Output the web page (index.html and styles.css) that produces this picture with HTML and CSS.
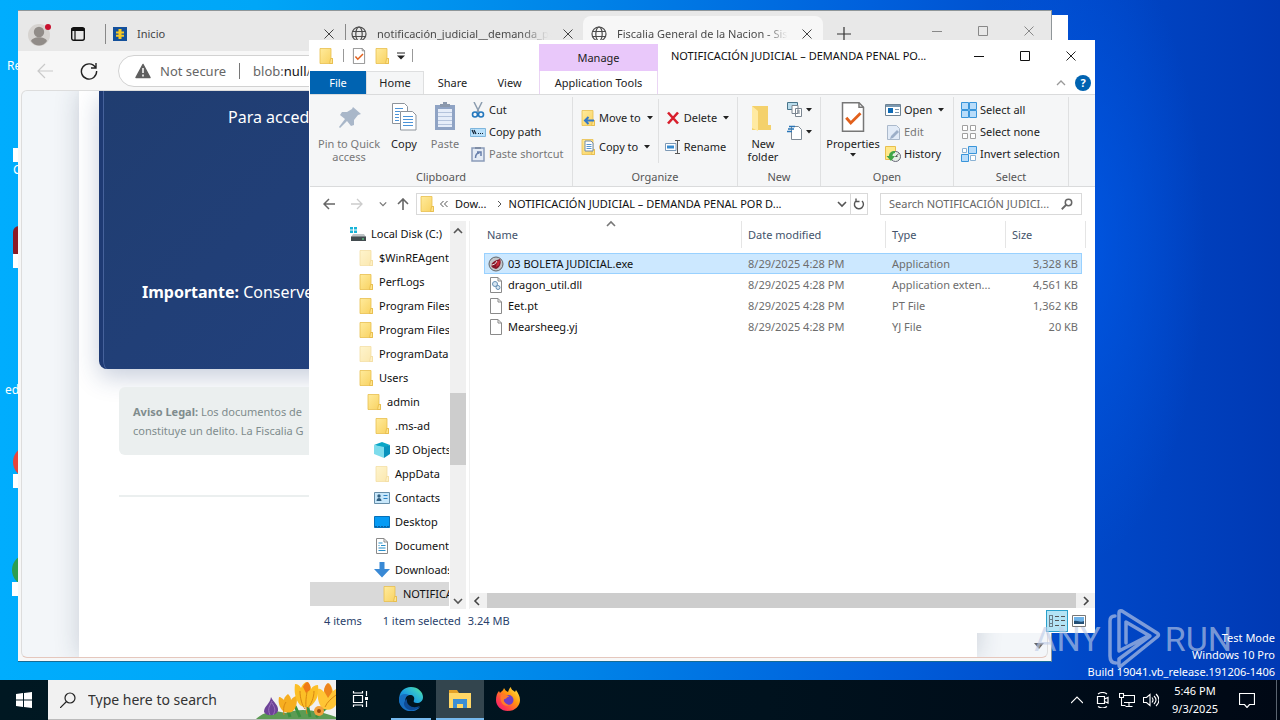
FILE: index.html
```html
<!DOCTYPE html>
<html lang="en">
<head>
<meta charset="utf-8">
<title>Desktop</title>
<link rel="stylesheet" href="styles.css">
</head>
<body>
<svg class="sprite" aria-hidden="true">
  <defs>
    <linearGradient id="gFolder" x1="0" y1="0" x2="1" y2="1"><stop offset="0" stop-color="#ffeb9c"/><stop offset="1" stop-color="#f8d15f"/></linearGradient>
    <linearGradient id="gEdge" x1="0" y1="1" x2="1" y2="0"><stop offset="0" stop-color="#0c59a4"/><stop offset=".45" stop-color="#1b9de2"/><stop offset=".75" stop-color="#36c6c9"/><stop offset="1" stop-color="#66eb6e"/></linearGradient>
    <linearGradient id="gFox" x1="1" y1="0" x2="0" y2="1"><stop offset="0" stop-color="#fff44f"/><stop offset=".4" stop-color="#ff980e"/><stop offset=".75" stop-color="#ff3750"/><stop offset="1" stop-color="#e31587"/></linearGradient>
  </defs>
  <symbol id="folder" viewBox="0 0 16 16"><path d="M2 .5h11v10h1.500v5H2z" fill="url(#gFolder)" stroke="#e8bf4e" stroke-width=".8"/><path d="M12.600 10.500l-1 5h2.900v-5z" fill="#ffe48c" stroke="#e3b53f" stroke-width=".7"/></symbol>
  <symbol id="x" viewBox="0 0 12 12"><path d="M1.500 1.500l9 9m0-9l-9 9" stroke="currentColor" fill="none"/></symbol>
  <symbol id="down" viewBox="0 0 10 10"><path d="M1 3l4 4 4-4" stroke="currentColor" stroke-width="1.600" fill="none"/></symbol>
  <symbol id="tri" viewBox="0 0 6 4"><path d="M0 0h6l-3 3.500z" fill="currentColor"/></symbol>
  <symbol id="globe" viewBox="0 0 16 16"><g fill="none" stroke="#4c4c4c" stroke-width="1.200"><circle cx="8" cy="8" r="7"/><ellipse cx="8" cy="8" rx="3.200" ry="7"/><path d="M1.500 5.500h13M1.500 10.500h13"/></g></symbol>
  <symbol id="page" viewBox="0 0 16 16"><path d="M2.500.500h7.500l3.500 3.500v11.500h-11z" fill="#fff" stroke="#8a8a8a"/><path d="M10 .500v3.500h3.500" fill="none" stroke="#8a8a8a"/></symbol>
  <symbol id="check" viewBox="0 0 16 20"><path d="M1 .500h11l3 3v16H1z" fill="#fff" stroke="#777"/><path d="M12 .500v3h3" fill="none" stroke="#777"/><path d="M3.500 10.500l3 3.500 6.500-6.500" stroke="#e2601c" stroke-width="1.900" fill="none"/></symbol>
  <symbol id="lens" viewBox="0 0 16 16"><circle cx="10" cy="6" r="4.300" fill="none" stroke="currentColor" stroke-width="2"/><path d="M7 9l-6 6" stroke="currentColor" stroke-width="2.400"/></symbol>
</svg>

<div class="screen">
  <main class="desktop">
    <div class="shortcut s1">Re</div>
    <div class="shortcut s2"><i class="arrow"></i>C</div>
    <div class="shortcut s3"><i class="blob dark"></i><i class="arrow"></i></div>
    <div class="shortcut s4">ed</div>
    <div class="shortcut s5"><i class="blob red"></i><i class="arrow"></i></div>
    <div class="shortcut s6"><i class="blob green"></i><i class="arrow"></i></div>

    <div class="back-window"></div>

    <section class="browser">
      <header class="tabstrip">
        <svg class="avatar" viewBox="0 0 24 24"><circle cx="11" cy="13" r="11" fill="#d6d3d0"/><circle cx="11" cy="10" r="5.200" fill="#918c88"/><path d="M3 19c2-5 14-5 16 0-4 6-12 6-16 0z" fill="#918c88"/><circle cx="20" cy="5" r="3" fill="#c8102e"/></svg>
        <svg class="spaces" viewBox="0 0 16 16"><rect x="1.700" y="1.700" width="12.600" height="12.600" rx="2" fill="none" stroke="#111" stroke-width="1.400"/><path d="M1.500 2h13v3h-13z" fill="#111"/><path d="M5 5v9" stroke="#111" stroke-width="1.200"/></svg>
        <div class="tab t1"><svg class="i14" viewBox="0 0 14 14"><path d="M0 0h14v14H0z" fill="#14509b"/><path d="M5.500 2h3v2.500H11v2H8.500v1.200H11v2H8.500V12h-3V9.700H3v-2h2.500V6.500H3v-2h2.500z" fill="#f7c824"/></svg><span>Inicio</span><button aria-label="Close tab"><svg class="i12"><use href="#x"/></svg></button></div>
        <div class="tab t2"><svg class="i16"><use href="#globe"/></svg><span class="fade">notificación_judicial__demanda_pe</span><button aria-label="Close tab"><svg class="i12"><use href="#x"/></svg></button></div>
        <div class="tab t3"><svg class="i16"><use href="#globe"/></svg><span class="fade active-fade">Fiscalia General de la Nacion - Sist</span><button aria-label="Close tab"><svg class="i12"><use href="#x"/></svg></button></div>
        <button class="plus" aria-label="New tab"><svg class="i14" viewBox="0 0 14 14"><path d="M7 0v14M0 7h14" stroke="#333" stroke-width="1.200"/></svg></button>
        <div class="bcontrols">
          <button aria-label="Minimize"><svg class="i12" viewBox="0 0 12 12"><path d="M1 6.500h10" stroke="#888"/></svg></button>
          <button aria-label="Maximize"><svg class="i12" viewBox="0 0 12 12"><path d="M1.500 1.500h9v9h-9z" fill="none" stroke="#888"/></svg></button>
          <button aria-label="Close"><svg class="i12"><use href="#x"/></svg></button>
        </div>
      </header>
      <div class="toolbar">
        <button aria-label="Back"><svg class="i18" viewBox="0 0 18 18"><path d="M17 9H2m7-7L2 9l7 7" fill="none" stroke="#c9c9c9" stroke-width="1.200"/></svg></button>
        <button aria-label="Reload"><svg class="i18" viewBox="0 0 18 18"><path d="M15.500 5.500A7.600 7.600 0 1 0 16.600 9M16 1v5h-5" fill="none" stroke="#222" stroke-width="1.400"/></svg></button>
        <div class="url"><svg class="i16" viewBox="0 0 16 16"><path d="M8 1.500L15 14.500H1z" fill="#5f5f5f" stroke="#5f5f5f" stroke-width="1.500" stroke-linejoin="round"/><path d="M8 5v5M8 11.500v2" stroke="#fff" stroke-width="1.500"/></svg><span>Not secure</span><i></i><span>blob:<b>null</b>/</span></div>
      </div>
      <div class="viewport">
        <article class="sheet">
          <div class="hero">
            <p class="lead">Para acceder</p>
            <p class="note"><strong>Importante:</strong> Conserve</p>
          </div>
          <div class="legal"><p><strong>Aviso Legal:</strong> Los documentos de<br>constituye un delito. La Fiscalia G</p></div>
          <hr>
        </article>
        <svg class="scroll-arrow" viewBox="0 0 10 6"><path d="M0 0h10L5 6z" fill="#666"/></svg>
      </div>
    </section>

    <section class="explorer">
      <header class="titlebar">
        <div class="quick">
          <svg class="i16"><use href="#folder"/></svg><i></i>
          <svg class="i16"><use href="#check"/></svg><svg class="i16"><use href="#folder"/></svg>
          <svg class="customize" viewBox="0 0 8 8"><path d="M0 1h8" stroke="#222"/><path d="M0 3.500h8l-4 4z" fill="#222"/></svg><i></i>
        </div>
        <div class="manage">Manage</div>
        <h1>NOTIFICACIÓN JUDICIAL – DEMANDA PENAL PO...</h1>
        <div class="wcontrols">
          <button aria-label="Minimize"><svg class="i12" viewBox="0 0 12 12"><path d="M1 6.500h10" stroke="#111"/></svg></button>
          <button aria-label="Maximize"><svg class="i12" viewBox="0 0 12 12"><path d="M1.500 1.500h9v9h-9z" fill="none" stroke="#111"/></svg></button>
          <button aria-label="Close"><svg class="i12"><use href="#x"/></svg></button>
        </div>
      </header>
      <nav class="menu">
        <button class="file">File</button><button class="home">Home</button><button>Share</button><button>View</button><button class="apptools">Application Tools</button>
        <span class="menu-end"><svg class="i10" viewBox="0 0 10 10"><path d="M1 7l4-4 4 4" fill="none" stroke="#999" stroke-width="1.300"/></svg><button class="help" aria-label="Help">?</button></span>
      </nav>
      <div class="ribbon">
        <div class="group">
          <div class="tools clip">
            <button class="big off pin"><svg class="i32" viewBox="0 0 32 32"><path d="M20 6l8 7-3 1-4 5 0 5-3 1-4-5-7 7-1-1 6-8-5-4 2-3 5 0 5-3z" fill="#a9b7c9"/></svg>Pin to Quick access</button>
            <button class="big copy"><svg class="i32" viewBox="0 0 32 32"><g fill="#fff" stroke="#8d939b"><path d="M4.500 2.500h12l3 3v17h-15z"/><path d="M12.500 10.500h12l3.500 3.500v15h-15.500z"/></g><path d="M7 7.500h8M7 10.500h5M7 13.500h4M7 16.500h4M7 19.500h4M15 15.500h10M15 18.500h10M15 21.500h10M15 24.500h10" stroke="#4b93d8"/></svg>Copy</button>
            <button class="big off paste"><svg class="i32" viewBox="0 0 32 32"><path d="M6 4h20v25H6z" fill="#8fa3c4"/><path d="M9 8h14v18H9z" fill="#e6edf9"/><path d="M11 6h10V3h-3V1h-4v2h-3z" fill="#8b98ac"/><path d="M9 11.500h14M9 15.500h14M9 19.500h14M9 23.500h14" stroke="#b4c3dc"/></svg>Paste</button>
            <div class="stack">
              <button><svg class="i16" viewBox="0 0 16 16"><path d="M4 0l5 10M12 0L7 10" stroke="#8b9caf" stroke-width="1.500"/><g fill="none" stroke="#2377bd" stroke-width="1.600"><circle cx="5" cy="12.500" r="2.500"/><circle cx="11" cy="12.500" r="2.500"/></g></svg>Cut</button>
              <button><svg class="i16" viewBox="0 0 16 16"><path d="M.500 4.500h15v8H.500z" fill="#b9e0fa" stroke="#7eb6dd"/><path d="M2 6l2 4m0-4l2 4M8 9.500h1m1 0h1m1 0h1" stroke="#123" stroke-width="1.200"/></svg>Copy path</button>
              <button class="off"><svg class="i16" viewBox="0 0 16 16"><path d="M2 2h12v13H2z" fill="#e4ebf5" stroke="#8b9cb9" stroke-width="1.500"/><path d="M5 1h6v2H5z" fill="#7f8da5"/><path d="M5.500 12c0-3 1-5 4-5M7 6h4v4" fill="none" stroke="#677fab" stroke-width="1.500"/></svg>Paste shortcut</button>
            </div>
          </div>
          <h2>Clipboard</h2>
        </div>
        <div class="group">
          <div class="tools org">
            <div class="stack wide">
              <button><svg class="i16"><use href="#folder"/><path d="M5 10.500h9M8.500 7L5 10.500 8.500 14" fill="none" stroke="#3479c7" stroke-width="2"/></svg>Move to<svg class="tri"><use href="#tri"/></svg></button>
              <button><svg class="i16"><use href="#folder"/><path d="M5 2h6l2 2v8H5z" fill="#fff" stroke="#718ba8"/><path d="M6.500 5.500h5m-5 2h5m-5 2h5" stroke="#5594d0"/></svg>Copy to<svg class="tri"><use href="#tri"/></svg></button>
            </div>
            <i class="vline"></i>
            <div class="stack wide">
              <button><svg class="i16" viewBox="0 0 16 16"><path d="M3 2.500l10 11M13 2.500l-10 11" stroke="#d81e2c" stroke-width="2.600"/></svg>Delete<svg class="tri"><use href="#tri"/></svg></button>
              <button><svg class="i16" viewBox="0 0 16 16"><path d="M.500 4.500H11v7H.500z" fill="#fff" stroke="#7d99b5"/><path d="M2 6.500h7v3H2z" fill="#368bd0"/><path d="M10 1.500h5M10 14.500h5M12.500 2v12" stroke="#555"/></svg>Rename</button>
            </div>
          </div>
          <h2>Organize</h2>
        </div>
        <div class="group">
          <div class="tools newg">
            <button class="big nf"><svg class="i32" viewBox="0 0 32 32"><path d="M5 5h16v19h3v5H5z" fill="#f4d16c"/><path d="M5 5l6 5v20l-6-3z" fill="#ffeaa2"/></svg>New folder</button>
            <div class="stack minis">
              <button aria-label="New item"><svg class="i16" viewBox="0 0 16 16"><path d="M.500.500h10v7H.500z" fill="#b9dcec" stroke="#48758b"/><path d="M5 3.500h6v8H5zM8.500 6.500h6v8h-6z" fill="#fff" stroke="#7a8590"/><path d="M10 9h3m-3 2h3" stroke="#7a8590"/></svg><svg class="tri"><use href="#tri"/></svg></button>
              <button aria-label="Easy access"><svg class="i16" viewBox="0 0 16 16"><path d="M4.500 2.500h7l3 3v10h-10z" fill="#fff" stroke="#7f8a95"/><path d="M2 2.500h6M1 5h6M0 7.500h5" stroke="#2975b7" stroke-width="1.300"/></svg><svg class="tri"><use href="#tri"/></svg></button>
            </div>
          </div>
          <h2>New</h2>
        </div>
        <div class="group">
          <div class="tools openg">
            <button class="big prop"><svg class="i32 chk"><use href="#check"/></svg>Properties<svg class="tri"><use href="#tri"/></svg></button>
            <div class="stack">
              <button><svg class="i16" viewBox="0 0 16 16"><path d="M.500 2.500h15v11H.500z" fill="#fff" stroke="#6e8293"/><path d="M1 3h14v2H1z" fill="#7b98b0"/><path d="M3 6h5v5H3z" fill="#0e6ab5"/><path d="M10 7.500h4m-4 3h4" stroke="#7b98b0"/></svg>Open<svg class="tri"><use href="#tri"/></svg></button>
              <button class="off"><svg class="i16" viewBox="0 0 16 16"><path d="M2.500 1.500h9l3 3v11h-12z" fill="#e2ebf7" stroke="#abb9cb"/><path d="M12 6l2 2-6 6-3 1 1-3z" fill="#9dafc8"/></svg>Edit</button>
              <button><svg class="i16" viewBox="0 0 16 16"><path d="M.500.500h10v13H.500z" fill="#ffe88b" stroke="#e8bf4e"/><circle cx="10.500" cy="10.500" r="5" fill="#e6eee5" stroke="#667"/><path d="M10.500 10.500l3-2.500M10.500 10.500h2" stroke="#555" fill="none"/><path d="M10 5c-4 0-6 2-6 5H1.500L6 15l4-5H7.500c0-2 1-3 2.500-3z" fill="#41a546"/></svg>History</button>
            </div>
          </div>
          <h2>Open</h2>
        </div>
        <div class="group">
          <div class="tools sel">
            <div class="stack">
              <button><svg class="i16" viewBox="0 0 16 16"><g fill="#b8dcfa" stroke="#3995da"><path d="M.500.500h7v7h-7zM8.500.500h7v7h-7zM.500 8.500h7v7h-7zM8.500 8.500h7v7h-7z"/></g></svg>Select all</button>
              <button><svg class="i16" viewBox="0 0 16 16"><path d="M1.500 1.500h5v5h-5zM9.500 1.500h5v5h-5zM1.500 9.500h5v5h-5zM9.500 9.500h5v5h-5z" fill="#fff" stroke="#a0a0a0"/></svg>Select none</button>
              <button><svg class="i16" viewBox="0 0 16 16"><path d="M7.500.500h8v7h-8zM.500 8.500h7v7h-7z" fill="#b8dcfa" stroke="#3995da"/><path d="M1.500 2.500h4v4h-4zM9.500 9.500h5v5h-5z" fill="#fff" stroke="#8ab2d4"/></svg>Invert selection</button>
            </div>
          </div>
          <h2>Select</h2>
        </div>
      </div>
      <div class="addressbar">
        <div class="history">
          <svg class="i12" viewBox="0 0 12 12"><path d="M12 6H1m5-5L1 6l5 5" fill="none" stroke="#666" stroke-width="1.500"/></svg>
          <svg class="i12" viewBox="0 0 12 12"><path d="M0 6h11M6 1l5 5-5 5" fill="none" stroke="#ccc" stroke-width="1.300"/></svg>
          <svg class="i8"><use href="#down"/></svg>
          <svg class="i12" viewBox="0 0 12 12"><path d="M6 12V1M1 6l5-5 5 5" fill="none" stroke="#666" stroke-width="1.600"/></svg>
        </div>
        <div class="path"><svg class="i16"><use href="#folder"/></svg><svg class="laquo" viewBox="0 0 10 8"><path d="M4.500 1l-3 3 3 3M8.500 1l-3 3 3 3" fill="none" stroke="#555"/></svg><span>Dow...</span><svg class="crumb" viewBox="0 0 6 8"><path d="M1 1l3 3-3 3" fill="none" stroke="#555"/></svg><span class="crumb-name">NOTIFICACIÓN JUDICIAL – DEMANDA PENAL POR D...</span><svg class="i10"><use href="#down"/></svg><button aria-label="Refresh"><svg class="i12" viewBox="0 0 12 12"><path d="M3.500 2.500A4.500 4.500 0 1 0 9 3M3 .500v3h3.500" fill="none" stroke="#555" stroke-width="1.400"/></svg></button></div>
        <label class="find"><input type="text" aria-label="Search folder" placeholder="Search NOTIFICACIÓN JUDICI..."><svg class="i12" viewBox="0 0 16 16"><use href="#lens"/></svg></label>
      </div>
      <div class="content">
        <div class="tree">
          <ul>
            <li class="l0"><svg class="i16" viewBox="0 0 16 16"><path d="M0 1h3v2.500H0zM4 1h3v2.500H4zM0 4.500h3V7H0zM4 4.500h3V7H4z" fill="#18b4d8"/><path d="M3 8h11l2 3H1z" fill="#bfc4c7"/><path d="M1 10.500h15V15H1z" fill="#434c50"/><path d="M12 13h2" stroke="#60f090"/></svg>Local Disk (C:)</li>
            <li class="l1"><svg class="i16 dim"><use href="#folder"/></svg>$WinREAgent</li>
            <li class="l1"><svg class="i16"><use href="#folder"/></svg>PerfLogs</li>
            <li class="l1"><svg class="i16"><use href="#folder"/></svg>Program Files</li>
            <li class="l1"><svg class="i16"><use href="#folder"/></svg>Program Files</li>
            <li class="l1"><svg class="i16 dim"><use href="#folder"/></svg>ProgramData</li>
            <li class="l1"><svg class="i16"><use href="#folder"/></svg>Users</li>
            <li class="l2"><svg class="i16"><use href="#folder"/></svg>admin</li>
            <li class="l3"><svg class="i16"><use href="#folder"/></svg>.ms-ad</li>
            <li class="l3"><svg class="i16" viewBox="0 0 16 16"><path d="M0 3l8-3 8 3-6 3z" fill="#0aa7c7"/><path d="M0 3l10 2v11L0 12z" fill="#7edcec"/><path d="M10 5l6-2v9l-6 4z" fill="#0892bd"/></svg>3D Objects</li>
            <li class="l3"><svg class="i16 dim"><use href="#folder"/></svg>AppData</li>
            <li class="l3"><svg class="i16" viewBox="0 0 16 16"><path d="M.500 2.500h15v11H.500z" fill="#c8e7fa" stroke="#678ea8"/><circle cx="5" cy="6" r="1.700" fill="#315f80"/><path d="M2.500 11c0-4 5-4 5 0z" fill="#315f80"/><path d="M9.500 5.500h4m-4 3h4" stroke="#2c83c5"/></svg>Contacts</li>
            <li class="l3"><svg class="i16" viewBox="0 0 16 16"><path d="M.500 2.500h15v11H.500z" fill="#069bf4" stroke="#0770b8"/><path d="M1 12.500h14" stroke="#0661a5" stroke-dasharray="2 1"/></svg>Desktop</li>
            <li class="l3"><svg class="i16"><use href="#page"/><path d="M4.500 5h4M7 7.500h4.500M4.500 10h7M4.500 12.500h7M4.500 7.500h1" stroke="#298fc9" stroke-width="1.200"/></svg>Documents</li>
            <li class="l3"><svg class="i16" viewBox="0 0 16 16"><path d="M5.500 0h5v7H16l-8 8.500L0 7h5.500z" fill="#3989d5"/></svg>Downloads</li>
            <li class="l4 current"><svg class="i16"><use href="#folder"/></svg>NOTIFICACIÓN</li>
          </ul>
          <div class="vscroll"><svg class="i10 flip"><use href="#down"/></svg><i></i><svg class="i10"><use href="#down"/></svg></div>
        </div>
        <div class="files">
          <table>
            <thead><tr><th class="c-name">Name<svg class="sort i10 flip"><use href="#down"/></svg></th><th class="c-date">Date modified</th><th class="c-type">Type</th><th>Size</th></tr></thead>
            <tbody>
              <tr class="picked"><td><span><svg class="i16" viewBox="0 0 16 16"><circle cx="8" cy="8" r="7" fill="#c2c5c9" stroke="#60656a"/><path d="M3 9c1-3 5-5 9-6 2 5-1 9-4 10-3-1-5-2-5-4z" fill="#851728"/><path d="M3 9c2 0 5-1 6-4" stroke="#eee" fill="none"/><path d="M9 6l3-2-1 5-3 2z" fill="#ca2a39"/></svg>03 BOLETA JUDICIAL.exe</span></td><td>8/29/2025 4:28 PM</td><td>Application</td><td>3,328 KB</td></tr>
              <tr><td><span><svg class="i16"><use href="#page"/><g fill="#d8e7f3" stroke="#6791b5"><circle cx="7" cy="7" r="2.500"/><circle cx="10" cy="10.500" r="2"/></g></svg>dragon_util.dll</span></td><td>8/29/2025 4:28 PM</td><td>Application exten...</td><td>4,561 KB</td></tr>
              <tr><td><span><svg class="i16"><use href="#page"/></svg>Eet.pt</span></td><td>8/29/2025 4:28 PM</td><td>PT File</td><td>1,362 KB</td></tr>
              <tr><td><span><svg class="i16"><use href="#page"/></svg>Mearsheeg.yj</span></td><td>8/29/2025 4:28 PM</td><td>YJ File</td><td>20 KB</td></tr>
            </tbody>
          </table>
          <div class="hscroll"><svg class="i10 left"><use href="#down"/></svg><i></i><svg class="i10 right"><use href="#down"/></svg></div>
        </div>
      </div>
      <footer class="status"><span>4 items</span><span>1 item selected</span><span>3.24 MB</span>
        <div class="views"><button class="on" aria-label="Details"><svg class="i16" viewBox="0 0 16 16"><path d="M.500 2v12M3.500 2v12M.500 2.500h3m-3 4h3m-3 4h3m-3 3h3" stroke="#6a7d88" fill="none"/><path d="M6 3.500h4M6 7.500h4M6 12.500h4M12 3.500h4m-4 4h4m-4 5h4" stroke="#555"/></svg></button><button aria-label="Large icons"><svg class="i14" viewBox="0 0 14 14"><path d="M.500 1.500h13v11H.500z" fill="#fff" stroke="#777"/><path d="M2 3h10v7H2z" fill="#6eb2e8"/><path d="M2 7c4-1 6 2 10 0v3H2z" fill="#244f75"/></svg></button></div>
      </footer>
    </section>

    <div class="watermark"><span>ANY</span><svg viewBox="0 0 56 62"><path d="M9 8Q4 8 4 13V48Q4 55 10 55M13 43V5Q13 2 16 3L51 25Q54 27 51 29L15 58Q13 60 13 57V51L44 28 20 14V35M13 43L42 28" fill="none" stroke="currentColor" stroke-width="3.500" stroke-linecap="round" stroke-linejoin="round"/></svg><span>RUN</span></div>
    <div class="build"><div>Test Mode</div><div>Windows 10 Pro</div><div>Build 19041.vb_release.191206-1406</div></div>
  </main>

  <footer class="taskbar">
    <button class="start" aria-label="Start"><svg class="i16" viewBox="0 0 16 16"><path d="M0 2l7-1v6.500H0zM8 1l8-1v7.500H8zM0 8.500h7V15l-7-1zM8 8.500h8V16l-8-1z" fill="#fff"/></svg></button>
    <label class="search"><svg class="i16" viewBox="0 0 16 16"><circle cx="10" cy="6" r="5" fill="none" stroke="#222" stroke-width="1.200"/><path d="M6.500 9.500L0 16" stroke="#222" stroke-width="1.200"/></svg><input type="text" aria-label="Search Windows" placeholder="Type here to search">
      <svg class="flowers" viewBox="0 0 82 40"><path d="M2 40c8-8 20-9 30-6 16-6 33-2 50 4v2z" fill="#5c9b54"/><path d="M36 38l-4-12M56 38l-4-18M62 38l18-16M46 38l-5-11" stroke="#3b913f" stroke-width="3"/><path d="M17 18c2 5 8 8 7 14-3 6-12 5-14 1 0-6 6-8 7-15z" fill="#6d4398"/><path d="M18 22c-2 5-5 7-2 14m2-12c3 5 4 7 1 12" stroke="#9b70bd" fill="none"/><path d="M25 18c2 0 4 2 5 3 0-3 2-4 4-6 2 2 3 4 3 6 1-2 4-4 6-4 0 6 0 11-4 15-3 2-7 2-10 0-4-4-5-9-4-14z" fill="#f6ae20"/><path d="M41 5c3 0 5 2 6 4 1-3 3-5 5-6 3 1 5 4 5 7 2-3 4-4 7-4 1 8 0 14-6 20-4 3-8 3-12 0-5-6-6-13-5-21z" fill="#fcbf26"/><path d="M49 8c1-3 3-5 5-5 2 2 3 5 2 8l-4 3z" fill="#ef7a16"/><path d="M64 10c2-1 4 1 6 3 0-4 2-7 5-9 2 2 3 5 4 8l3-2v16c-3 5-9 6-14 3-4-5-5-12-4-19z" fill="#ffc535"/><path d="M70 12c0-4 2-7 4-8 3 2 4 5 4 9l-4 6z" fill="#ed841a"/><path d="M30 36c-1-7 0-10 2-13M53 35c-2-9-1-16 0-22M46 12c0 7 2 14 5 18M60 12c0 7-3 13-6 17M71 28c2-5 7-9 11-12" stroke="#d98711" fill="none"/><circle cx="65" cy="32" r="5" fill="#f4a13b"/><circle cx="65" cy="32" r="2" fill="#9e4b0c"/></svg>
    </label>
    <button class="app" aria-label="Task view"><svg class="i18" viewBox="0 0 18 18"><path d="M2.500 5.500h9v7h-9zM2.500 1v2h9V1M2.500 17v-2h9v2M15.500 1v5M15.500 11v6" fill="none" stroke="#fff" stroke-width="1.200"/><path d="M14 7h3v3h-3z" fill="#fff"/></svg></button>
    <button class="app open" aria-label="Edge"><svg class="i24" viewBox="0 0 24 24"><path d="M0 13C0 5 5 0 12 0c7 0 12 5 12 10 0 4-3 6-6 6-3 0-4-1-3-3 1-3-1-5-4-5-6 0-9 7-6 12C2 19 0 16 0 13z" fill="url(#gEdge)"/><path d="M0 12c1-5 6-6 10-4-4 1-5 7-2 10 3 4 8 5 13 2-3 4-8 5-12 4C3 22 0 18 0 12z" fill="#176fc1"/><path d="M8 12c-1 7 6 10 13 7-4 5-11 6-15 1-2-3-1-6 2-8z" fill="#0e4b95"/></svg></button>
    <button class="app open focus" aria-label="File Explorer"><svg class="i24" viewBox="0 0 24 24"><path d="M1 3h8l2 3h12v15H1z" fill="#e4a227"/><path d="M1 6h22v15H1z" fill="#ffd766"/><path d="M5 12h14v9h-4v-4H9v4H5z" fill="#3c8ed2"/></svg></button>
    <button class="app" aria-label="Firefox"><svg class="i24" viewBox="0 0 24 24"><path d="M15 0c0 3 2 3 4 5l1-2c2 3 4 6 4 10 0 6-5 11-12 11S0 19 0 13c0-4 1-7 3-9l1 2c2-2 3-2 4-5 1 2 2 3 4 4 1-2 1-4 3-5z" fill="url(#gFox)"/><circle cx="12.500" cy="13" r="5" fill="#6c3fc8"/><path d="M5 8c4-2 6 0 9 2-3-1-3 2-5 2-3 0 0 6 5 6-6 3-11-3-9-10z" fill="#ff7b2a"/></svg></button>
    <div class="tray">
      <svg class="i12" viewBox="0 0 12 12"><path d="M0 9l6-6 6 6" stroke="#fff" fill="none" stroke-width="1.200"/></svg>
      <svg class="i16" viewBox="0 0 16 16"><path d="M2.500 4.500h7v7h-7zM9.500 7l3.500-1.500v5.500l-3.500-1.500M3 2c3-2 6-2 9 0M3 14.500c3 2 6 2 9 0" fill="none" stroke="#fff" stroke-width="1.200"/></svg>
      <svg class="i16" viewBox="0 0 16 16"><path d="M5 3.500h10.500v7H5M10 11v3M6.500 14.500h7M.500 1.500h4v4h-4zM2.500 6v7.500h4" fill="none" stroke="#fff" stroke-width="1.100"/></svg>
      <svg class="i16" viewBox="0 0 16 16"><path d="M.500 5.500h3L7 2.500v11L3.500 10.500h-3zM9 5.500q2 2.500 0 5M11 4q4 4 0 8M13 2q6 6 0 12" fill="none" stroke="#fff" stroke-width="1.100"/></svg>
      <div class="clock"><div>5:46 PM</div><div>9/3/2025</div></div>
      <svg class="i16 notif" viewBox="0 0 16 16"><path d="M.500 1.500h15v11h-5l-2.500 3-2.500-3h-5z" fill="none" stroke="#fff" stroke-width="1.200"/></svg>
    </div>
  </footer>
</div>
</body>
</html>
```

FILE: styles.css
```css
* { box-sizing: border-box; }
body { margin: 0; font: 11px/16px "Noto Sans", "Open Sans", sans-serif; color: #222; }
button, input { font: inherit; color: inherit; border: 0; background: none; padding: 0; margin: 0; }
button { display: flex; align-items: center; justify-content: center; white-space: nowrap; }
input { outline: 0; min-width: 0; flex: 1; }
p, h1, h2, ul { margin: 0; padding: 0; font-weight: 400; font-size: inherit; }
svg { display: block; flex: none; }
.sprite { position: absolute; width: 0; height: 0; }
.i8 { width: 8px; height: 8px; }
.i10 { width: 10px; height: 10px; }
.i12 { width: 12px; height: 12px; }
.i14 { width: 14px; height: 14px; }
.i16 { width: 16px; height: 16px; }
.i18 { width: 18px; height: 18px; }
.i24 { width: 24px; height: 24px; }
.i32 { width: 32px; height: 32px; }
.tri { width: 6px; height: 4px; }
.dim { opacity: .5; }
.flip { transform: rotate(180deg); }
.left { transform: rotate(90deg); }
.right { transform: rotate(-90deg); }

.screen { display: grid; grid-template-rows: 1fr 40px; height: 100vh; overflow: hidden; }
.desktop {
  position: relative; overflow: hidden;
  background:
    radial-gradient(ellipse 130px 320px at 84% 36%, rgba(0, 92, 236, .7), rgba(0, 80, 220, 0)),
    linear-gradient(90deg, #00adfd 0, #00a6f7 20%, #0084e8 45%, #0060dc 68%, #0048c8 85%, #0039b4 100%);
}

/* Desktop shortcuts that stick out to the left of the windows */
.shortcut { position: absolute; left: 7px; color: #fff; font-size: 12px; }
.s1 { top: 58px; }
.s2 { top: 148px; left: 13px; }
.s3 { top: 226px; left: 13px; }
.s4 { top: 382px; left: 5px; }
.s5 { top: 446px; left: 13px; }
.s6 { top: 554px; left: 12px; }
.arrow { display: block; width: 12px; height: 14px; background: #fff; border: 3px solid #fff; border-right-color: #28639a; }
.blob { display: block; width: 32px; height: 32px; margin-bottom: -4px; }
.dark { background: #8c1b26; border-radius: 6px; }
.red { background: #e8443a; border-radius: 50%; }
.green { background: #2c9e50; border-radius: 50%; }

.back-window { position: absolute; left: 40px; right: 212px; top: 15px; bottom: 60px; background: #fff; }

/* Browser */
.browser { position: absolute; left: 18px; right: 228px; top: 10px; bottom: 18px; display: flex; flex-direction: column; background: #f7f7f7; border: 1px solid #8f9699; border-left-width: 0; border-bottom-color: #176b94; color: #444; }
.tabstrip { display: flex; align-items: center; height: 40px; padding-top: 5px; background: #e8e8e8; }
.avatar { width: 24px; height: 24px; margin: 0 18px 0 10px; }
.spaces { width: 16px; height: 16px; margin-right: 19px; }
.tab { display: flex; align-items: center; height: 35px; gap: 10px; }
.tab > span { flex: 1; overflow: hidden; white-space: nowrap; }
.tab > span.fade { background: linear-gradient(90deg, #444 82%, #e8e8e8 98%); background-clip: text; color: transparent; }
.tab > span.active-fade { background-image: linear-gradient(90deg, #444 86%, #f7f7f7 98%); }
.t1 { width: 240px; padding: 0 10px 0 8px; background: linear-gradient(#888, #888) left center / 1px 20px no-repeat; }
.t2 { width: 238px; padding: 0 9px 0 6px; background: linear-gradient(#888, #888) left center / 1px 20px no-repeat; }
.t3 { width: 240px; padding: 0 10px 0 8px; background: #f7f7f7; border-radius: 8px 8px 0 0; }
.plus { margin-left: 14px; }
.bcontrols { display: flex; gap: 34px; margin: -5px 16px 0 auto; color: #888; }
.toolbar { display: flex; align-items: center; height: 39px; padding-left: 18px; gap: 26px; font-size: 13px; }
.url { flex: 1; display: flex; align-items: center; gap: 9px; height: 32px; margin: 0 20px 0 -6px; padding-left: 16px; border: 1px solid #d2d2d2; border-radius: 16px; background: #fff; color: #666; }
.url i { width: 1px; height: 16px; background: #777; margin: 0 4px; }
.url b { font-weight: 400; color: #111; }
.viewport { position: relative; flex: 1; overflow: hidden; margin: 0 3px 3px; padding: 0 70px 0 57px; border: 1px solid #ddd; border-bottom-color: #e5c7bd; border-radius: 6px; background: #f3f6f9; }
.sheet { height: 100%; padding: 0 20px; background: #fff; box-shadow: 0 0 24px rgba(30, 50, 80, .2); }
.hero { height: 278px; padding: 14px 0 0 39px; border-left: 4px solid #1e3a73; border-radius: 0 0 8px 8px; background: linear-gradient(135deg, #203d70, #24458c); box-shadow: inset 1px 0 #46629b, 0 8px 24px rgba(30, 60, 114, .25); color: #fff; font-size: 16px; line-height: 24px; }
.lead { padding-left: 86px; }
.note { margin-top: 151px; }
.legal { margin: 18px 20px 0; padding: 15px 14px; background: #ebefef; border-radius: 6px; color: #7f8c8d; line-height: 19px; }
.sheet hr { margin: 40px 20px; border: 0; height: 2px; background: #ebefef; }
.scroll-arrow { position: absolute; right: 3px; bottom: 8px; width: 10px; height: 6px; }

/* File explorer */
.explorer { position: absolute; left: 309px; right: 185px; top: 40px; bottom: 47px; display: flex; flex-direction: column; background: #fff; border-left: 1px solid #fff; }
.titlebar { display: flex; height: 31px; }
.quick { display: flex; align-items: center; width: 229px; padding-left: 8px; gap: 7px; }
.quick i { width: 1px; height: 13px; background: #999; margin-left: 2px; }
.quick i:last-child { margin-left: 0; }
.customize { width: 8px; height: 8px; }
.manage { width: 119px; margin-top: 4px; background: #e9c8fa; line-height: 28px; text-align: center; }
h1 { flex: 1; padding-left: 13px; line-height: 31px; color: #111; overflow: hidden; white-space: nowrap; }
.wcontrols { display: flex; gap: 34px; padding-right: 18px; }
.menu { display: flex; height: 23px; }
.menu button { width: 57px; }
.menu .file { width: 56px; background: #0063b1; color: #fff; }
.menu .home { width: 58px; background: #f5f6f7; border: 1px solid #dedfe0; border-bottom: 0; }
.menu .apptools { width: 119px; margin-left: 1px; border: 1px solid #ead5f4; border-width: 0 1px; }
.menu-end { display: flex; align-items: center; margin-left: auto; gap: 9px; padding-right: 4px; }
.menu .help { width: 16px; height: 16px; border-radius: 50%; background: #0063b1; color: #fff; font-weight: 700; }
.ribbon { display: grid; grid-template-columns: 263px 165px 83px 133px 115px; height: 93px; padding-top: 2px; background: #f5f6f7; border: 1px solid #dadbdc; border-width: 1px 0; }
.group { display: flex; flex-direction: column; border-right: 1px solid #dfe0e1; }
.group h2 { text-align: center; line-height: 18px; color: #555; }
.tools { display: flex; height: 71px; }
.big { display: flex; flex-direction: column; justify-content: flex-start; line-height: 13px; padding-top: 4px; gap: 4px; white-space: normal; text-align: center; }
.off { color: #777; }
.pin { width: 78px; padding-left: 4px; padding-right: 4px; }
.copy { width: 32px; }
.pin, .copy, .paste { flex: none; }
.paste { width: 50px; }
.stack { display: flex; flex-direction: column; padding-top: 2px; }
.stack button { height: 22px; gap: 3px; justify-content: flex-start; }
.stack .tri { margin-left: 3px; }
.wide { gap: 7px; padding-top: 10px; }
.org { padding-left: 7px; }
.org .wide { width: 75px; }
.vline { width: 1px; background: #dfe0e1; margin: 2px 6px 5px 5px; }
.newg { padding-left: 4px; }
.nf { width: 42px; }
.minis { padding-left: 3px; }
.minis button { gap: 0; }
.prop { width: 64px; }
.prop .tri { margin-top: -1px; }
.chk { padding: 1px 3px; }
.sel { padding-left: 7px; }
.addressbar { display: flex; align-items: center; height: 34px; padding-right: 13px; }
.history { display: flex; align-items: center; width: 106px; padding-left: 13px; gap: 16px; color: #777; }
.history .i8 { margin-right: -6px; }
.path { flex: 1; display: flex; align-items: center; height: 22px; padding-left: 2px; border: 1px solid #d9d9d9; color: #111; white-space: nowrap; }
.laquo { width: 10px; height: 8px; margin: 0 6px 0 4px; }
.crumb { width: 6px; height: 8px; margin: 0 6px 0 10px; }
.crumb-name { flex: 1; overflow: hidden; }
.path button { width: 17px; height: 20px; border-left: 1px solid #d9d9d9; margin-left: 3px; }
.path .i10 { color: #555; }
.find { display: flex; align-items: center; width: 202px; height: 22px; margin-left: 12px; padding: 0 8px; border: 1px solid #d9d9d9; color: #666; }
.find input::placeholder, .search input::placeholder { color: inherit; opacity: 1; }
.content { flex: 1; display: flex; min-height: 0; }
.tree { display: flex; width: 160px; border-right: 1px solid #f0f0f0; padding-right: 3px; color: #111; }
.tree ul { width: 139px; padding-top: 1px; overflow: hidden; list-style: none; }
.tree li { display: flex; align-items: center; gap: 5px; height: 24px; white-space: nowrap; }
.l0 { padding-left: 40px; }
.l1 { padding-left: 48px; }
.l2 { padding-left: 56px; }
.l3 { padding-left: 64px; }
.l4 { padding-left: 72px; }
.current { background: #d9d9d9; }
.vscroll { display: flex; flex-direction: column; align-items: center; flex: 1; margin-left: 1px; padding: 5px 0 3px; background: #f0f0f0; color: #555; }
.vscroll i { width: 16px; height: 72px; background: #cdcdcd; margin: 157px 0 auto; }
.files { flex: 1; display: flex; flex-direction: column; justify-content: space-between; min-width: 0; }
table { width: 602px; margin-left: 14px; border-spacing: 0; table-layout: fixed; }
.c-name { width: 258px; }
.c-date { width: 144px; }
.c-type { width: 120px; }
th { position: relative; height: 27px; padding: 0 6px; border-right: 1px solid #e5e5e5; font-weight: 400; color: #43536b; text-align: left; }
th:first-child { padding-left: 3px; }
thead::after { content: ""; display: block; height: 5px; }
.sort { position: absolute; left: 122px; top: -2px; color: #777; }
td { height: 21px; padding: 0 6px; color: #6d6d6d; white-space: nowrap; }
td:first-child { padding-left: 4px; color: #111; }
td:last-child { text-align: right; padding-right: 4px; border-right: 4px solid transparent; background-clip: padding-box; }
td span { display: flex; align-items: center; gap: 4px; }
.picked td { background-color: #cce8ff; box-shadow: inset 0 1px #99d1ff, inset 0 -1px #99d1ff; }
.picked td:first-child { box-shadow: inset 1px 1px #99d1ff, inset 0 -1px #99d1ff; }
.picked td:last-child { box-shadow: inset -1px 1px #99d1ff, inset 0 -1px #99d1ff; }
.hscroll { display: flex; align-items: center; gap: 5px; height: 15px; margin-bottom: 1px; padding: 0 4px 0 2px; background: #f0f0f0; color: #444; }
.hscroll i { flex: 1; height: 15px; background: #cdcdcd; }
.status { display: flex; align-items: center; height: 24px; padding-left: 14px; color: #2a3f6b; }
.status span:nth-child(2) { margin: 0 7px 0 21px; }
.views { display: flex; margin-left: auto; padding-right: 9px; gap: 4px; }
.views button { width: 22px; height: 22px; }
.views .on { background: #b4e4f5; border: 1px solid #2ba0cb; }
.views button + button { width: 14px; }

/* Watermark and build stamp */
.watermark { position: absolute; right: 48px; bottom: 10px; display: flex; align-items: center; color: rgba(190, 203, 230, .65); font: 34px/40px Roboto, sans-serif; }
.watermark svg { width: 56px; height: 62px; margin: 0 3px 0 5px; }
.build { position: absolute; right: 5px; bottom: 0; color: #fff; line-height: 17px; text-align: right; }

/* Taskbar */
.taskbar { display: flex; background: linear-gradient(90deg, #001822, #00121e 60%, #000815); color: #fff; }
.start, .app { width: 48px; height: 40px; }
.search { position: relative; display: flex; align-items: center; width: 288px; padding-left: 12px; gap: 12px; background: #f1f1f1; color: #333; font-size: 14px; border-bottom: 1px solid #bbb; }
.flowers { position: absolute; right: 0; bottom: 0; width: 82px; height: 40px; }
.app { border-bottom: 2px solid transparent; }
.open { border-color: #76b9ed; }
.open:not(.focus) { margin: 0 5px 0 7px; width: 40px; }
.focus { background: #33454e; }
.tray { display: flex; align-items: center; margin-left: auto; gap: 8px; padding-right: 21px; border-right: 1px solid #5a6470; margin-right: 3px; }
.tray .i12 { margin-right: 4px; }
.clock { width: 56px; text-align: center; line-height: 18px; }
.notif { margin-left: 8px; }
```
